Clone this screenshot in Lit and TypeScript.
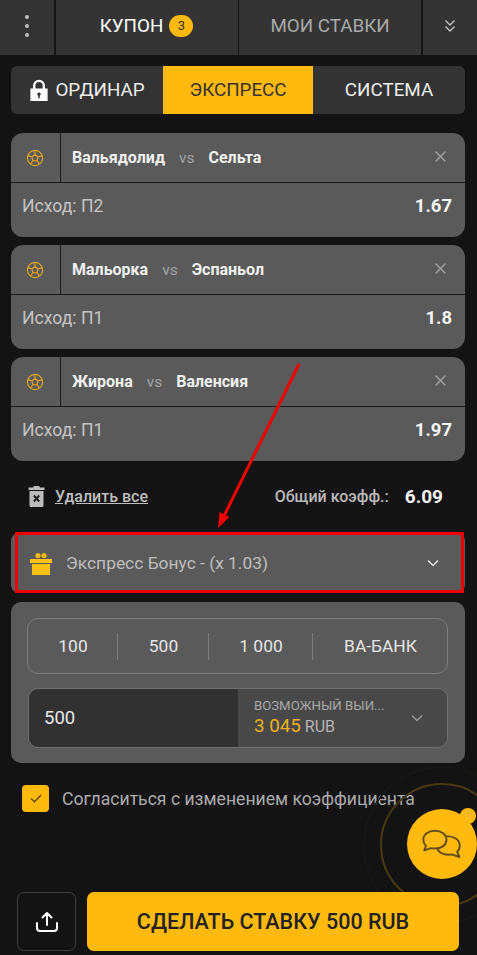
import { LitElement, html, css, svg } from "lit";
import { customElement } from "lit/decorators.js";

const ball = html`<svg class="ball" viewBox="0 0 18 18" fill="none" stroke="#d9a21f" stroke-width="1.3"><circle cx="9" cy="9" r="7.6"/><path d="M9 5.6l3.2 2.3-1.2 3.8H7L5.8 7.9zM9 5.6V1.6M12.2 7.9l3.9-1.3M11 11.7l2.4 3.2M7 11.7l-2.4 3.2M5.8 7.9L1.9 6.6"/></svg>`;
const chevron = (c: string) => html`<svg class="chev" viewBox="0 0 12 8" fill="none" stroke=${c} stroke-width="1.5"><path d="M1 1.5l5 5 5-5"/></svg>`;

const bets = [
  { a: "Вальядолид", b: "Сельта", r: "П2", k: "1.67" },
  { a: "Мальорка", b: "Эспаньол", r: "П1", k: "1.8" },
  { a: "Жирона", b: "Валенсия", r: "П1", k: "1.97" },
];

@customElement("app-root")
export class AppRoot extends LitElement {
  static styles = css`
    :host { display: block; position: relative; width: 477px; height: 955px; overflow: hidden; background: #131313; font-family: Roboto, "Liberation Sans", sans-serif; color: #fff; }
    .top { display: grid; grid-template-columns: 54px 182px 182px 1fr; column-gap: 1.5px; height: 55px; background: #151515; }
    .top > div { background: #343434; display: flex; align-items: center; justify-content: center; font-size: 18.8px; padding-bottom: 4px; box-sizing: border-box; }
    .top .off { color: #a9a9a9; }
    .badge { width: 24px; height: 22px; border-radius: 11px; background: #ffba0d; color: #333; font-size: 13px; display: flex; align-items: center; justify-content: center; margin-left: 6px; }
    .dots { display: flex; flex-direction: column; gap: 5px; }
    .dots i { width: 4px; height: 4px; border-radius: 2px; background: #bdbdbd; }
    .tabs { display: grid; grid-template-columns: 152px 150px 1fr; height: 48px; margin: 11px 12px 19px 11px; background: #333; border-radius: 6px; overflow: hidden; font-size: 18.8px; }
    .tabs > div { display: flex; align-items: center; justify-content: center; color: #eee; }
    .tabs .on { background: #ffba0d; color: #333; }
    .lock { width: 20px; height: 23px; margin: 0 6px 0 0; }
    .card { margin: 0 12px 8px 11px; height: 104px; background: #5a5a5a; border-radius: 12px; overflow: hidden; }
    .chead { display: flex; height: 49px; border-bottom: 1px solid #1d1d1d; align-items: center; }
    .cicon { width: 49px; height: 100%; border-right: 1px solid #1d1d1d; display: flex; align-items: center; justify-content: center; }
    .ball { width: 18px; height: 18px; margin-right: 1px; }
    .teams { flex: 1; padding-left: 11px; display: flex; align-items: center; font-size: 16px; font-weight: 700; color: #f1f1f1; }
    .vs { font-weight: 400; color: #a4a4a4; margin: 0 14px; font-size: 15.5px; }
    .x { width: 11px; height: 11px; margin-right: 19px; margin-top: -2px; }
    .cbody { display: flex; justify-content: space-between; padding: 12px 13px 0 11px; font-size: 17.6px; color: #c4c4c4; align-items: center; }
    .cbody b { color: #f4f4f4; font-size: 18.5px; }
    .sum { display: flex; align-items: center; height: 54px; margin: 0 34px 0 28px; font-size: 16px; }
    .trash { width: 17px; height: 21px; margin-right: 10px; }
    .del { color: #bdbdbd; text-decoration: underline; font-weight: 500; flex: 1; }
    .tot { color: #b9b9b9; font-weight: 500; }
    .sum b { font-size: 19px; margin-left: 16px; color: #f4f4f4; }
    .bonus { height: 60px; margin: 10px 12px 9px 11px; background: #5a5a5a; border-radius: 8px; display: flex; align-items: center; padding: 0 26px 0 19px; color: #bebebe; font-size: 17.4px; }
    .gift { width: 22px; height: 23px; margin: 0 14px 0 0; }
    .bonus span { flex: 1; }
    .chev { width: 12px; height: 8px; }
    .panel { margin: 0 12px 0 11px; height: 161px; background: #5a5a5a; border-radius: 10px; padding: 16px 17px 0 16px; box-sizing: border-box; }
    .quick { height: 56px; border: 1px solid #7c7c7c; border-radius: 11px; display: grid; grid-template-columns: 90px 91px 104px 1fr; box-sizing: border-box; align-items: center; font-size: 17.4px; color: #e6e6e6; }
    .quick div { text-align: center; height: 27px; line-height: 27px; border-right: 1px solid #7c7c7c; padding-left: 1px; }
    .quick div:last-child { border: 0; }
    .stake { display: flex; height: 60px; margin: 14px 0 0 1px; border: 1px solid #6f6f6f; border-radius: 10px; overflow: hidden; box-sizing: border-box; }
    .inp { width: 209px; background: #313131; padding-left: 15px; box-sizing: border-box; display: flex; align-items: center; font-size: 18.5px; color: #e8e8e8; }
    .win { flex: 1; background: #484848; display: flex; align-items: center; padding: 0 24px 0 16px; }
    .win > div { flex: 1; }
    .w1 { font-size: 13.2px; color: #a9a9a9; line-height: 16px; }
    .w2 { font-size: 16px; color: #b5b5b5; line-height: 22px; margin-top: 1px; }
    .w2 em { font-style: normal; font-size: 18.8px; color: #ecb120; }
    .agree { display: flex; align-items: center; margin: 22px 0 0 22px; font-size: 17.6px; color: #ababab; white-space: nowrap; }
    .cb { width: 27px; height: 27px; border-radius: 4px; background: #ffba0d; display: flex; align-items: center; justify-content: center; margin-right: 13px; flex: none; }
    .cb svg { width: 12px; height: 9px; }
    .foot { display: flex; margin: 80px 18px 0 17px; gap: 11px; position: relative; }
    .share { width: 59px; height: 59px; border: 1px solid #3d3d3d; border-radius: 7px; box-sizing: border-box; display: flex; align-items: center; justify-content: center; background: #131313; }
    .share svg { width: 24px; height: 24px; }
    .go { flex: 1; height: 59px; background: #ffba0d; border-radius: 7px; display: flex; align-items: center; justify-content: center; color: #222; font-size: 21.5px; font-weight: 500; }
    .over { position: absolute; left: 0; top: 0; width: 477px; height: 955px; pointer-events: none; }
    .chat { position: absolute; left: 407px; top: 809px; width: 70px; height: 70px; border-radius: 35px; background: #ffba0d; }
    .chat svg { position: absolute; left: 14px; top: 20px; width: 42px; height: 32px; }
    .pip { position: absolute; left: 53px; top: -1px; width: 16px; height: 16px; border-radius: 8px; background: #ffba0d; color: #d9b664; font-size: 11px; text-align: center; line-height: 16px; }
  `;

  render() {
    return html`
      <div class="top">
        <div><span class="dots"><i></i><i></i><i></i></span></div>
        <div>КУПОН<span class="badge">3</span></div>
        <div class="off">МОИ СТАВКИ</div>
        <div><svg width="12" height="14" viewBox="0 0 12 14" fill="none" stroke="#c4c4c4" stroke-width="1.4"><path d="M1.5 1.5L6 6l4.500-4.500M1.500 7.500L6 12l4.500-4.500"/></svg></div>
      </div>
      <div class="tabs">
        <div><svg class="lock" viewBox="0 0 20 24"><path fill="none" stroke="#fff" stroke-width="2.500" d="M5 11V7a5 5 0 0 1 10 0v4"/><path fill="#fff" fill-rule="evenodd" d="M1 10h18v13H1zM10 14a1.800 1.800 0 0 0-.8 3.400V20h1.600v-2.600A1.800 1.800 0 0 0 10 14z"/></svg>ОРДИНАР</div>
        <div class="on">ЭКСПРЕСС</div>
        <div>СИСТЕМА</div>
      </div>
      ${bets.map(
        (b) => html`<div class="card">
          <div class="chead">
            <div class="cicon">${ball}</div>
            <div class="teams">${b.a}<span class="vs">vs</span>${b.b}</div>
            <svg class="x" viewBox="0 0 11 11" stroke="#a6a6a6" stroke-width="1.300"><path d="M.5.5l10 10M10.500.5l-10 10"/></svg>
          </div>
          <div class="cbody"><span>Исход: ${b.r}</span><b>${b.k}</b></div>
        </div>`
      )}
      <div class="sum">
        <svg class="trash" viewBox="0 0 17 21"><path fill="#bcbcbc" d="M6 0h5l1 1.500h4.500v2.500H.5V1.500H5zM1.500 5h14v14.500a1.500 1.500 0 0 1-1.500 1.500H3a1.500 1.500 0 0 1-1.500-1.500z"/><path stroke="#222" stroke-width="2" d="M5.800 9.500l5.400 6M11.200 9.500l-5.400 6"/></svg>
        <span class="del">Удалить все</span>
        <span class="tot">Общий коэфф.:</span><b>6.09</b>
      </div>
      <div class="bonus">
        <svg class="gift" viewBox="0 0 22 23"><circle cx="8" cy="3.500" r="2.600" fill="#f5b915"/><circle cx="14" cy="3.500" r="2.600" fill="#f5b915"/><path fill="#ffc115" d="M0 7h22v4H0zM2 12h18v11H2z"/></svg>
        <span>Экспресс Бонус - (х 1.03)</span>
        ${chevron("#e4e4e4")}
      </div>
      <div class="panel">
        <div class="quick"><div>100</div><div>500</div><div>1 000</div><div>ВА-БАНК</div></div>
        <div class="stake">
          <div class="inp">500</div>
          <div class="win">
            <div><div class="w1">ВОЗМОЖНЫЙ ВЫИ...</div><div class="w2"><em>3 045</em> RUB</div></div>
            ${chevron("#9a9a9a")}
          </div>
        </div>
      </div>
      <div class="agree">
        <span class="cb"><svg viewBox="0 0 12 9" fill="none" stroke="#5a4712" stroke-width="1.300"><path d="M1 4.500l3.500 3.300L11 1"/></svg></span>
        Согласиться с изменением коэффициента
      </div>
      <svg class="over" viewBox="0 0 477 955" fill="none">
        ${svg`<circle cx="442" cy="845" r="61" stroke="#4a3a12" stroke-width="2"/>
        <circle cx="442" cy="845" r="78" stroke="#191815" stroke-width="1.500"/>`}
      </svg>
      <div class="foot">
        <div class="share"><svg viewBox="0 0 24 24" fill="none" stroke="#fff" stroke-width="2" stroke-linecap="round" stroke-linejoin="round"><path d="M12 15V3M7.500 7.500L12 3l4.500 4.500M2 13v5a3 3 0 0 0 3 3h14a3 3 0 0 0 3-3v-5"/></svg></div>
        <div class="go">СДЕЛАТЬ СТАВКУ 500 RUB</div>
      </div>
      <svg class="over" viewBox="0 0 477 955" fill="none">
        ${svg`<rect x="16.500" y="533.500" width="446" height="58" stroke="#f00000" stroke-width="3"/>
        <path d="M299 364L222 520" stroke="#f00000" stroke-width="3"/>
        <path d="M218 528l1.500-16 10 5z" fill="#f00000"/>`}
      </svg>
      <div class="chat">
        <span class="pip">1</span>
        <svg viewBox="0 0 46 36" fill="none" stroke="#5f4f1e" stroke-width="2.200" stroke-linejoin="round"><path d="M15 2c7.500 0 13 4 13 10s-5.500 10-13 10c-1.500 0-3-.2-4.300-.5L3 24l2-5C3 17 2 14.800 2 12 2 6 7.500 2 15 2z"/><path d="M28 8c8 0 15 3.500 15 11 0 2.800-1 4.800-3 6.500l2.500 6-8.500-3c-1 .3-2.500.5-4 .5-6 0-11-3-12.500-7.500"/></svg>
      </div>
    `;
  }
}
